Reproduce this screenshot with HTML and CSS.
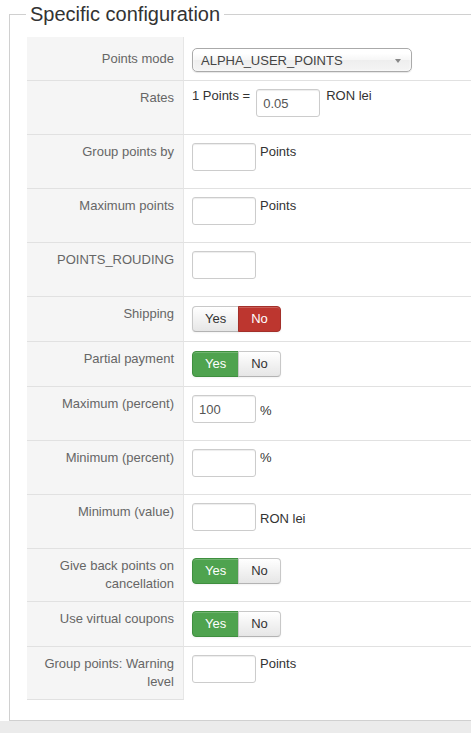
FILE: index.html
```
<!DOCTYPE html>
<html>
	<head>
		<title>Specific configuration</title>
		<meta http-equiv="Content-Type" content="text/html; charset=UTF-8">
		<link rel="stylesheet" href="styles.css">
	</head>
	<body>
		<div class="page">
			<fieldset class="config">
				<legend>Specific configuration</legend>
				<table class="admintable">
					<tr class="first">
						<td class="key">Points mode</td>
						<td>
							<div class="chzn-single"><span>ALPHA_USER_POINTS</span><b></b></div>
						</td>
					</tr>
					<tr>
						<td class="key">Rates</td>
						<td>
							<div class="field rates">
								<span class="unit unit-up">1 Points =</span>
								<input class="inputbox" type="text" value="0.05" />
								<span class="unit unit-up">RON lei</span>
							</div>
						</td>
					</tr>
					<tr>
						<td class="key">Group points by</td>
						<td>
							<div class="field">
								<input class="inputbox" type="text" value="" />
								<span class="unit">Points</span>
							</div>
						</td>
					</tr>
					<tr>
						<td class="key">Maximum points</td>
						<td>
							<div class="field">
								<input class="inputbox" type="text" value="" />
								<span class="unit">Points</span>
							</div>
						</td>
					</tr>
					<tr>
						<td class="key">POINTS_ROUDING</td>
						<td>
							<div class="field">
								<input class="inputbox" type="text" value="" />
							</div>
						</td>
					</tr>
					<tr>
						<td class="key">Shipping</td>
						<td>
							<div class="btn-group">
								<label class="btn">Yes</label>
								<label class="btn btn-danger">No</label>
							</div>
						</td>
					</tr>
					<tr>
						<td class="key">Partial payment</td>
						<td>
							<div class="btn-group">
								<label class="btn btn-success">Yes</label>
								<label class="btn">No</label>
							</div>
						</td>
					</tr>
					<tr>
						<td class="key">Maximum (percent)</td>
						<td>
							<div class="field">
								<input class="inputbox" type="text" value="100" />
								<span class="unit unit-low">%</span>
							</div>
						</td>
					</tr>
					<tr>
						<td class="key">Minimum (percent)</td>
						<td>
							<div class="field">
								<input class="inputbox" type="text" value="" />
								<span class="unit">%</span>
							</div>
						</td>
					</tr>
					<tr>
						<td class="key">Minimum (value)</td>
						<td>
							<div class="field">
								<input class="inputbox" type="text" value="" />
								<span class="unit unit-low">RON lei</span>
							</div>
						</td>
					</tr>
					<tr>
						<td class="key">Give back points on cancellation</td>
						<td>
							<div class="btn-group">
								<label class="btn btn-success">Yes</label>
								<label class="btn">No</label>
							</div>
						</td>
					</tr>
					<tr>
						<td class="key">Use virtual coupons</td>
						<td>
							<div class="btn-group">
								<label class="btn btn-success">Yes</label>
								<label class="btn">No</label>
							</div>
						</td>
					</tr>
					<tr class="last">
						<td class="key">Group points: Warning level</td>
						<td>
							<div class="field">
								<input class="inputbox" type="text" value="" />
								<span class="unit">Points</span>
							</div>
						</td>
					</tr>
				</table>
			</fieldset>
			<div class="footer"></div>
		</div>
	</body>
</html>
```
FILE: styles.css
```
html, body {
	margin: 0;
	padding: 0;
	overflow: hidden;
	background: #fff;
}

body {
	font-family: "Liberation Sans", Arial, Helvetica, sans-serif;
	font-size: 13px;
	line-height: 18px;
	color: #333;
}

.page {
	width: 600px;
}

.config {
	margin: 0 0 0 9px;
	padding: 9px 17px 20px 17px;
	border: 1px solid #d0d0d0;
	width: 540px;
}

.config legend {
	margin-left: -1px;
	padding: 0 4px;
	font-size: 20px;
	line-height: 28px;
	color: #333;
}

.footer {
	height: 13px;
	background-color: #ebebeb;
}

.admintable {
	width: 100%;
	border-collapse: separate;
	border-spacing: 0;
}

.admintable td {
	padding: 8px;
	vertical-align: top;
	border-bottom: 1px solid #e1e1e1;
}

.admintable td.key {
	width: 139px;
	padding: 8px 9px 8px 8px;
	text-align: right;
	color: #666;
	background-color: #f5f5f5;
	border-right: 1px solid #e6e6e6;
}

.admintable tr.first td.key {
	vertical-align: middle;
}

.admintable tr.last td {
	border-bottom: none;
}

.admintable tr.last td.key {
	border-bottom: 1px solid #e1e1e1;
}

/* chosen style select */
.chzn-single {
	box-sizing: border-box;
	display: flex;
	justify-content: space-between;
	align-items: center;
	width: 220px;
	height: 24px;
	margin-top: 3px;
	padding: 1px 0 0 8px;
	line-height: 22px;
	color: #444;
	border: 1px solid #aaa;
	border-radius: 5px;
	background: linear-gradient(#ffffff 20%, #f6f6f6 50%, #eeeeee 52%, #f4f4f4 100%);
	box-shadow: inset 0 0 3px #fff, 0 1px 1px rgba(0, 0, 0, 0.1);
}

.chzn-single b {
	width: 0;
	height: 0;
	margin-right: 10px;
	border-left: 3px solid transparent;
	border-right: 3px solid transparent;
	border-top: 4px solid #888;
}

.field {
	display: flex;
	align-items: flex-start;
	gap: 4px;
}

.field.rates {
	gap: 6px;
}

.inputbox {
	box-sizing: border-box;
	width: 64px;
	height: 28px;
	margin: 0 0 9px 0;
	padding: 4px 6px;
	font-family: "Liberation Sans", Arial, Helvetica, sans-serif;
	font-size: 13px;
	line-height: 18px;
	color: #555;
	background-color: #fff;
	border: 1px solid #ccc;
	border-radius: 3px;
	box-shadow: inset 0 1px 1px rgba(0, 0, 0, 0.075);
}

.unit {
	white-space: nowrap;
	color: #333;
}

.unit-up {
	margin-top: -2px;
}

.unit-low {
	margin-top: 7px;
}

.btn-group {
	display: flex;
	margin: 1px 0;
}

.btn {
	display: inline-block;
	padding: 3px 12px;
	font-size: 13px;
	line-height: 18px;
	color: #333;
	text-align: center;
	cursor: pointer;
	background-color: #f5f5f5;
	background-image: linear-gradient(#ffffff, #e6e6e6);
	border: 1px solid #c8c8c8;
	border-bottom-color: #b3b3b3;
	box-shadow: inset 0 1px 0 rgba(255, 255, 255, 0.2), 0 1px 2px rgba(0, 0, 0, 0.05);
}

.btn:first-child {
	border-radius: 4px 0 0 4px;
}

.btn + .btn {
	margin-left: -1px;
	border-radius: 0 4px 4px 0;
}

.btn-success {
	color: #fff;
	background-color: #4fa34f;
	background-image: none;
	border-color: #3f8f3f;
}

.btn-danger {
	color: #fff;
	background-color: #bd362f;
	background-image: none;
	border-color: #a3302a;
}
```
